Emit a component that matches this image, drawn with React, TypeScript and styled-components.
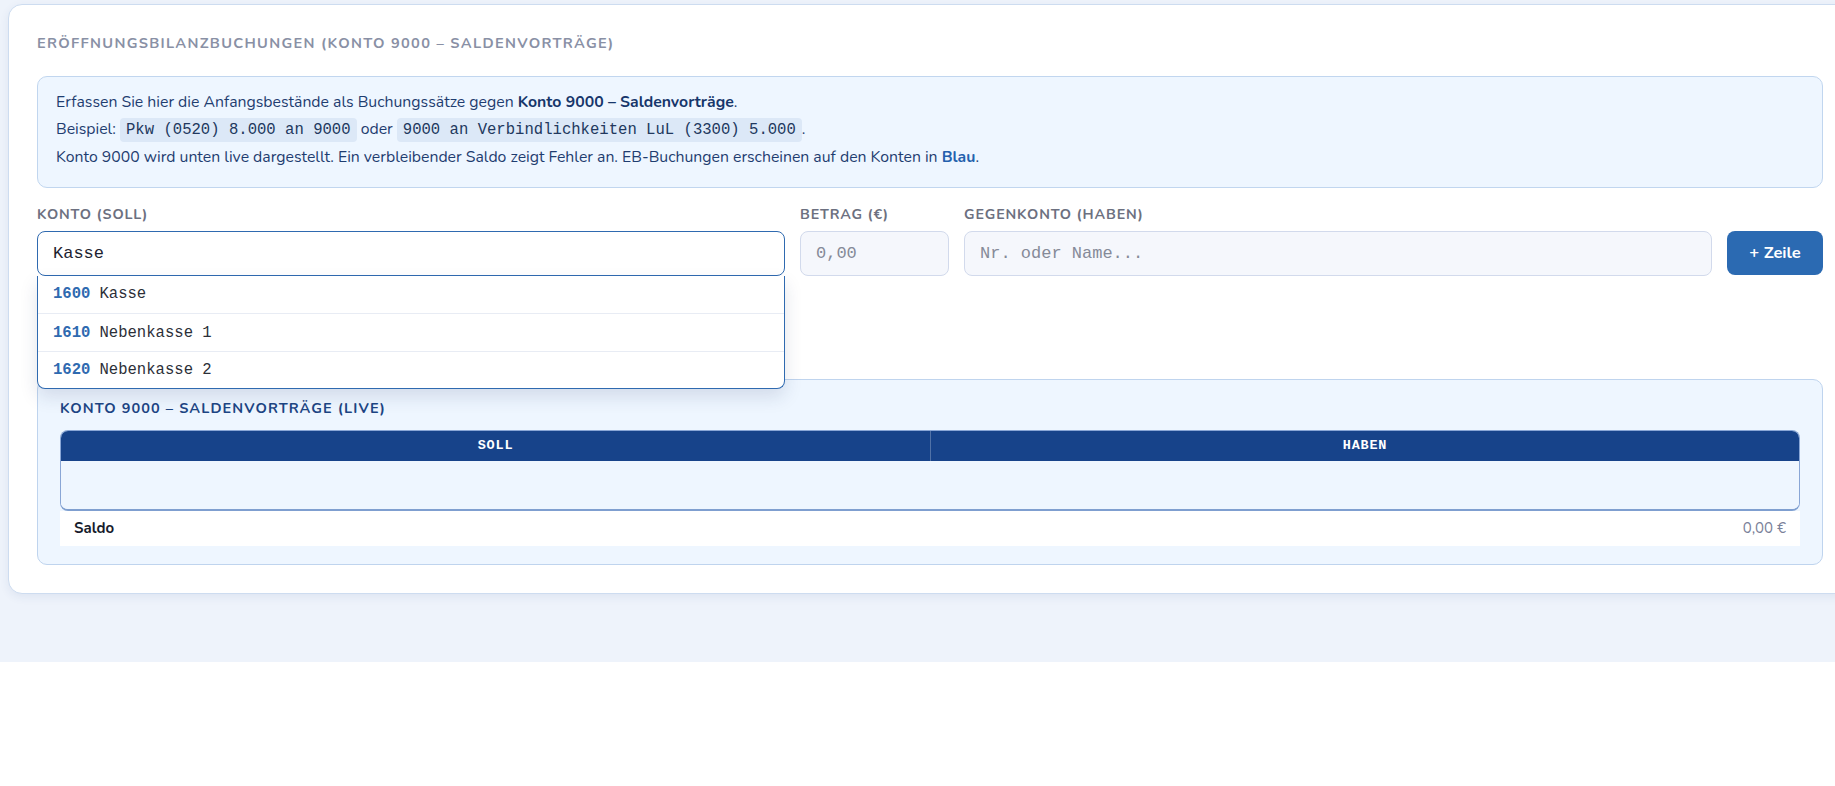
import React from 'react';
import styled, { createGlobalStyle } from 'styled-components';

const GlobalStyle = createGlobalStyle`
  html, body {
    margin: 0;
    padding: 0;
    overflow: hidden;
    background: #ffffff;
  }

  body {
    font-family: 'Nunito', 'Lato', 'Noto Sans', sans-serif;
    color: #1f2a44;
  }

  * {
    box-sizing: border-box;
  }
`;

const sans = `'Nunito', 'Lato', 'Noto Sans', sans-serif`;
const mono = `'Liberation Mono', 'DejaVu Sans Mono', monospace`;

interface Account {
  nr: string;
  name: string;
}

const suggestions: Account[] = [
  { nr: '1600', name: 'Kasse' },
  { nr: '1610', name: 'Nebenkasse 1' },
  { nr: '1620', name: 'Nebenkasse 2' },
];

const Page = styled.div`
  background: #eef3fb;
  padding: 4px 0 68px 8px;
`;

const Card = styled.section`
  width: 1844px;
  background: #ffffff;
  border: 1px solid #cddcf0;
  border-radius: 14px;
  padding: 28px;
  box-shadow: 0 3px 10px rgba(40, 70, 130, 0.08);
`;

const SectionTitle = styled.h2`
  margin: 0 0 23px;
  font-family: ${sans};
  font-size: 14.6px;
  line-height: 20px;
  font-weight: 700;
  letter-spacing: 0.09em;
  text-transform: uppercase;
  color: #8990a5;
`;

const InfoBox = styled.div`
  background: #eef6ff;
  border: 1px solid #c1d6ef;
  border-radius: 10px;
  padding: 12px 18px 15px;
  font-size: 15.8px;
  line-height: 27.2px;
  color: #1f3d70;
`;

const Strong = styled.strong`
  font-weight: 700;
  color: #17366b;
`;

const Blue = styled.strong`
  font-weight: 700;
  color: #2461ad;
`;

const Code = styled.code`
  font-family: ${mono};
  font-size: 15.6px;
  background: #dce8f7;
  color: #22385e;
  border-radius: 4px;
  padding: 3px 6px;
`;

const FormRow = styled.div`
  display: grid;
  grid-template-columns: 1fr 149px 1fr 96px;
  column-gap: 15px;
  align-items: end;
  margin-top: 18px;
`;

const Field = styled.label`
  display: flex;
  flex-direction: column;
  gap: 7px;
  position: relative;
`;

const FieldLabel = styled.span`
  font-family: ${sans};
  font-size: 14.3px;
  line-height: 18px;
  font-weight: 700;
  letter-spacing: 0.06em;
  text-transform: uppercase;
  color: #6c7080;
`;

const TextInput = styled.input<{ $active?: boolean }>`
  height: 45px;
  width: 100%;
  padding: 0 15px;
  font-family: ${mono};
  font-size: 17px;
  color: #1d2230;
  background: ${(p) => (p.$active ? '#ffffff' : '#f5f7fc')};
  border: 1px solid ${(p) => (p.$active ? '#2f6ab0' : '#d2daec')};
  border-radius: 8px;
  outline: none;

  &::placeholder {
    color: #858a98;
  }
`;

const AddButton = styled.button`
  height: 44px;
  margin-bottom: 1px;
  border: none;
  border-radius: 8px;
  background: #2b6ab2;
  color: #ffffff;
  font-family: ${sans};
  font-size: 16.5px;
  font-weight: 700;
  cursor: pointer;
`;

const Dropdown = styled.ul`
  position: absolute;
  top: 100%;
  left: 0;
  right: 0;
  z-index: 5;
  margin: 0;
  padding: 0;
  list-style: none;
  background: #ffffff;
  border: 1px solid #2f6ab0;
  border-top: none;
  border-radius: 0 0 8px 8px;
  box-shadow: 0 8px 18px rgba(30, 50, 90, 0.13);
  overflow: hidden;
`;

const Option = styled.li`
  height: 37.6px;
  display: flex;
  align-items: center;
  gap: 9px;
  padding: 0 15px;
  font-family: ${mono};
  font-size: 15.6px;
  color: #2c2f38;

  & + & {
    border-top: 1px solid #e8ecf4;
  }
`;

const OptionNr = styled.span`
  font-weight: 700;
  color: #2f6ab0;
`;

const LiveBox = styled.div`
  margin-top: 103px;
  background: #eef6ff;
  border: 1px solid #bfd4ee;
  border-radius: 10px;
  padding: 18px 22px;
`;

const LiveTitle = styled.h3`
  margin: 0 0 12px;
  font-family: ${sans};
  font-size: 14.5px;
  line-height: 20px;
  font-weight: 700;
  letter-spacing: 0.075em;
  text-transform: uppercase;
  color: #1d4584;
`;

const TAccount = styled.div`
  border: 1px solid #89a6d6;
  border-bottom: 2px solid #7f9fd0;
  border-radius: 8px;
  overflow: hidden;
`;

const THead = styled.div`
  display: grid;
  grid-template-columns: 1fr 1fr;
  height: 30px;
  background: #17438a;
`;

const THeadCell = styled.div`
  display: flex;
  align-items: center;
  justify-content: center;
  font-family: ${mono};
  font-size: 13.5px;
  font-weight: 700;
  letter-spacing: 0.06em;
  color: #ffffff;

  & + & {
    border-left: 1px solid rgba(255, 255, 255, 0.25);
  }
`;

const TBody = styled.div`
  display: grid;
  grid-template-columns: 1fr 1fr;
  min-height: 48px;
  background: #eef6ff;
`;

const SaldoRow = styled.div`
  display: flex;
  justify-content: space-between;
  align-items: center;
  height: 35px;
  padding: 0 14px;
  background: #ffffff;
  font-size: 15px;
`;

const SaldoLabel = styled.span`
  font-weight: 700;
  color: #161b2c;
`;

const SaldoValue = styled.span`
  color: #7a8199;
`;

export default function App() {
  return (
    <>
      <GlobalStyle />
      <Page>
        <Card>
          <SectionTitle>Eröffnungsbilanzbuchungen (Konto 9000 – Saldenvorträge)</SectionTitle>

          <InfoBox>
            Erfassen Sie hier die Anfangsbestände als Buchungssätze gegen{' '}
            <Strong>Konto 9000 – Saldenvorträge</Strong>.
            <br />
            Beispiel: <Code>Pkw (0520) 8.000 an 9000</Code> oder{' '}
            <Code>9000 an Verbindlichkeiten LuL (3300) 5.000</Code>.
            <br />
            Konto 9000 wird unten live dargestellt. Ein verbleibender Saldo zeigt Fehler an.
            EB-Buchungen erscheinen auf den Konten in <Blue>Blau</Blue>.
          </InfoBox>

          <FormRow>
            <Field>
              <FieldLabel>Konto (Soll)</FieldLabel>
              <TextInput $active defaultValue="Kasse" />
              <Dropdown>
                {suggestions.map((s) => (
                  <Option key={s.nr}>
                    <OptionNr>{s.nr}</OptionNr>
                    {s.name}
                  </Option>
                ))}
              </Dropdown>
            </Field>
            <Field>
              <FieldLabel>Betrag (€)</FieldLabel>
              <TextInput placeholder="0,00" />
            </Field>
            <Field>
              <FieldLabel>Gegenkonto (Haben)</FieldLabel>
              <TextInput placeholder="Nr. oder Name..." />
            </Field>
            <AddButton>+ Zeile</AddButton>
          </FormRow>

          <LiveBox>
            <LiveTitle>Konto 9000 – Saldenvorträge (live)</LiveTitle>
            <TAccount>
              <THead>
                <THeadCell>SOLL</THeadCell>
                <THeadCell>HABEN</THeadCell>
              </THead>
              <TBody>
                <div />
                <div />
              </TBody>
            </TAccount>
            <SaldoRow>
              <SaldoLabel>Saldo</SaldoLabel>
              <SaldoValue>0,00 €</SaldoValue>
            </SaldoRow>
          </LiveBox>
        </Card>
      </Page>
    </>
  );
}
